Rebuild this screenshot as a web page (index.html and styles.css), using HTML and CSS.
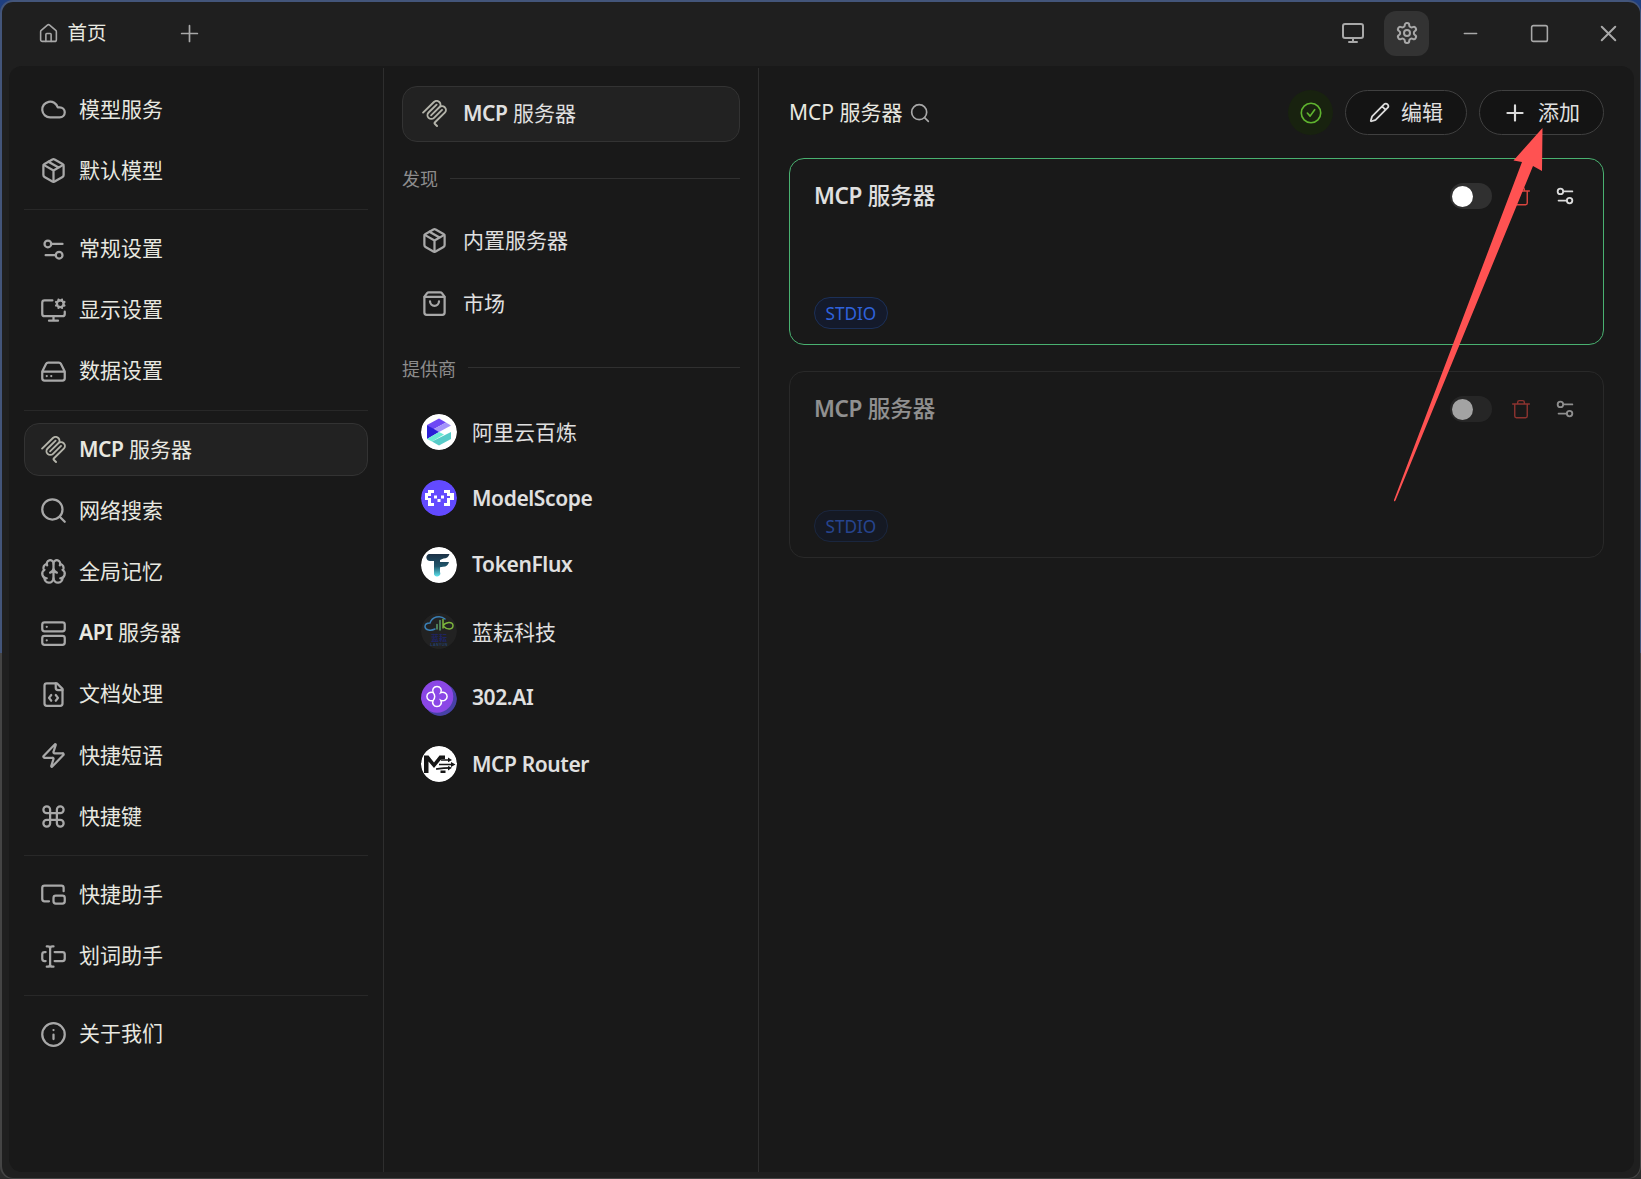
FILE: index.html
```html
<!DOCTYPE html>
<html lang="zh-CN">

<head>
  <meta charset="UTF-8">
  <meta name="viewport" content="width=device-width, initial-scale=1.0">
  <title>MCP 服务器</title>
  <link rel="stylesheet" href="styles.css">
</head>

<body>
  <!-- 图标 -->
  <svg class="sprite" xmlns="http://www.w3.org/2000/svg">
    <symbol id="home" viewBox="0 0 24 24">
      <path d="M15 21v-8a1 1 0 0 0-1-1h-4a1 1 0 0 0-1 1v8" />
      <path d="M3 10a2 2 0 0 1 .709-1.528l7-5.999a2 2 0 0 1 2.582 0l7 5.999A2 2 0 0 1 21 10v9a2 2 0 0 1-2 2H5a2 2 0 0 1-2-2z" />
    </symbol>
    <symbol id="plus" viewBox="0 0 24 24"><path d="M5 12h14M12 5v14" /></symbol>
    <symbol id="monitor" viewBox="0 0 24 24">
      <rect x="2" y="3" width="20" height="14" rx="2" />
      <path d="M8 21h8M12 17v4" />
    </symbol>
    <symbol id="settings" viewBox="0 0 24 24">
      <path d="M12.22 2h-.44a2 2 0 0 0-2 2v.18a2 2 0 0 1-1 1.73l-.43.25a2 2 0 0 1-2 0l-.15-.08a2 2 0 0 0-2.73.73l-.22.38a2 2 0 0 0 .73 2.73l.15.1a2 2 0 0 1 1 1.72v.51a2 2 0 0 1-1 1.74l-.15.09a2 2 0 0 0-.73 2.73l.22.38a2 2 0 0 0 2.73.73l.15-.08a2 2 0 0 1 2 0l.43.25a2 2 0 0 1 1 1.73V20a2 2 0 0 0 2 2h.44a2 2 0 0 0 2-2v-.18a2 2 0 0 1 1-1.73l.43-.25a2 2 0 0 1 2 0l.15.08a2 2 0 0 0 2.73-.73l.22-.39a2 2 0 0 0-.73-2.73l-.15-.08a2 2 0 0 1-1-1.74v-.5a2 2 0 0 1 1-1.74l.15-.09a2 2 0 0 0 .73-2.73l-.22-.38a2 2 0 0 0-2.73-.73l-.15.08a2 2 0 0 1-2 0l-.43-.25a2 2 0 0 1-1-1.73V4a2 2 0 0 0-2-2z" />
      <circle cx="12" cy="12" r="3" />
    </symbol>
    <symbol id="minus" viewBox="0 0 24 24"><path d="M5 12h14" /></symbol>
    <symbol id="square" viewBox="0 0 24 24"><rect x="3" y="3" width="18" height="18" rx="2" /></symbol>
    <symbol id="close" viewBox="0 0 24 24"><path d="M18 6 6 18M6 6l12 12" /></symbol>
    <symbol id="cloud" viewBox="0 0 24 24"><path d="M17.5 19H9a7 7 0 1 1 6.71-9h1.79a4.5 4.5 0 1 1 0 9Z" /></symbol>
    <symbol id="package" viewBox="0 0 24 24">
      <path d="M11 21.73a2 2 0 0 0 2 0l7-4A2 2 0 0 0 21 16V8a2 2 0 0 0-1-1.73l-7-4a2 2 0 0 0-2 0l-7 4A2 2 0 0 0 3 8v8a2 2 0 0 0 1 1.73z" />
      <path d="M12 22V12M3.29 7 12 12l8.71-5M7.5 4.27l9 5.15" />
    </symbol>
    <symbol id="sliders" viewBox="0 0 24 24">
      <path d="M20 7h-9M14 17H5" />
      <circle cx="17" cy="17" r="3" />
      <circle cx="7" cy="7" r="3" />
    </symbol>
    <symbol id="monitor-cog" viewBox="0 0 24 24">
      <path d="M12 17v4M8 21h8M22 13v2a2 2 0 0 1-2 2H4a2 2 0 0 1-2-2V5a2 2 0 0 1 2-2h7" />
      <path d="m14.305 7.53.923-.382m0-2.296-.923-.383m2.547-1.241-.383-.924m.383 6.468-.383.923m2.679-6.467.383-.924m-.001 7.392-.382-.924m1.624-3.92.924-.383m-.924 2.679.924.383" />
      <circle cx="18" cy="6" r="3" />
    </symbol>
    <symbol id="drive" viewBox="0 0 24 24">
      <path d="M22 12H2M5.45 5.11 2 12v6a2 2 0 0 0 2 2h16a2 2 0 0 0 2-2v-6l-3.45-6.89A2 2 0 0 0 16.76 4H7.24a2 2 0 0 0-1.79 1.11zM6 16h.01M10 16h.01" />
    </symbol>
    <symbol id="mcp" viewBox="0 0 24 24">
      <g fill="currentColor" stroke="none">
        <path d="M15.688 2.343a2.588 2.588 0 00-3.61 0l-9.626 9.44a.863.863 0 01-1.203 0 .823.823 0 010-1.18l9.626-9.44a4.313 4.313 0 016.016 0 4.116 4.116 0 011.204 3.54 4.3 4.3 0 013.609 1.18l.05.05a4.115 4.115 0 010 5.9l-8.706 8.537a.274.274 0 000 .393l1.788 1.754a.823.823 0 010 1.18.863.863 0 01-1.203 0l-1.788-1.753a1.92 1.92 0 010-2.754l8.706-8.538a2.47 2.47 0 000-3.54l-.05-.049a2.588 2.588 0 00-3.607-.003l-7.172 7.034-.002.002-.098.097a.863.863 0 01-1.204 0 .823.823 0 010-1.18l7.273-7.133a2.47 2.47 0 00-.003-3.537z" />
        <path d="M14.485 4.703a.823.823 0 000-1.18.863.863 0 00-1.204 0l-7.119 6.982a4.115 4.115 0 000 5.9 4.314 4.314 0 006.016 0l7.12-6.982a.823.823 0 000-1.18.863.863 0 00-1.204 0l-7.119 6.982a2.588 2.588 0 01-3.61 0 2.47 2.47 0 010-3.54l7.12-6.982z" />
      </g>
    </symbol>
    <symbol id="search" viewBox="0 0 24 24"><circle cx="11" cy="11" r="9" /><path d="m22 22-4.5-4.5" /></symbol>
    <symbol id="brain" viewBox="0 0 24 24">
      <path d="M12 18V5M15 13a4.17 4.17 0 0 1-3-4 4.17 4.17 0 0 1-3 4" />
      <path d="M17.598 6.5A3 3 0 1 0 12 5a3 3 0 1 0-5.598 1.5" />
      <path d="M17.997 5.125a4 4 0 0 1 2.526 5.77M18 18a4 4 0 0 0 2-7.464" />
      <path d="M19.967 17.483A4 4 0 1 1 12 18a4 4 0 1 1-7.967-.517" />
      <path d="M6 18a4 4 0 0 1-2-7.464M6.003 5.125a4 4 0 0 0-2.526 5.77" />
    </symbol>
    <symbol id="server" viewBox="0 0 24 24">
      <rect x="2" y="2" width="20" height="8" rx="2" />
      <rect x="2" y="14" width="20" height="8" rx="2" />
      <path d="M6 6h.01M6 18h.01" />
    </symbol>
    <symbol id="file-code" viewBox="0 0 24 24">
      <path d="M10 12.5 8 15l2 2.5M14 12.5l2 2.5-2 2.5M14 2v4a2 2 0 0 0 2 2h4" />
      <path d="M15 2H6a2 2 0 0 0-2 2v16a2 2 0 0 0 2 2h12a2 2 0 0 0 2-2V7z" />
    </symbol>
    <symbol id="zap" viewBox="0 0 24 24">
      <path d="M4 14a1 1 0 0 1-.78-1.63l9.9-10.2a.5.5 0 0 1 .86.46l-1.92 6.02A1 1 0 0 0 13 10h7a1 1 0 0 1 .78 1.63l-9.9 10.2a.5.5 0 0 1-.86-.46l1.92-6.02A1 1 0 0 0 11 14z" />
    </symbol>
    <symbol id="command" viewBox="0 0 24 24">
      <path d="M15 6v12a3 3 0 1 0 3-3H6a3 3 0 1 0 3 3V6a3 3 0 1 0-3 3h12a3 3 0 1 0-3-3" />
    </symbol>
    <symbol id="pip" viewBox="0 0 24 24">
      <path d="M21 9V6a2 2 0 0 0-2-2H4a2 2 0 0 0-2 2v10c0 1.1.9 2 2 2h4" />
      <rect x="12" y="13" width="10" height="7" rx="2" />
    </symbol>
    <symbol id="text-cursor" viewBox="0 0 24 24">
      <path d="M12 21h-1a2 2 0 0 1-2-2 2 2 0 0 1-2 2H6M13 8h7a2 2 0 0 1 2 2v4a2 2 0 0 1-2 2h-7M5 16H4a2 2 0 0 1-2-2v-4a2 2 0 0 1 2-2h1M6 3h1a2 2 0 0 1 2 2 2 2 0 0 1 2-2h1M9 5v14" />
    </symbol>
    <symbol id="info" viewBox="0 0 24 24"><circle cx="12" cy="12" r="10" /><path d="M12 16v-4M12 8h.01" /></symbol>
    <symbol id="bag" viewBox="0 0 24 24">
      <path d="M16 10a4 4 0 0 1-8 0M3.103 6.034h17.794" />
      <path d="M3.4 5.467a2 2 0 0 0-.4 1.2V20a2 2 0 0 0 2 2h14a2 2 0 0 0 2-2V6.667a2 2 0 0 0-.4-1.2l-2-2.667A2 2 0 0 0 17 2H7a2 2 0 0 0-1.6.8z" />
    </symbol>
    <symbol id="check" viewBox="0 0 24 24"><circle cx="12" cy="12" r="10.6" /><path d="m8 12 3 3.4 5-7" /></symbol>
    <symbol id="pencil" viewBox="0 0 24 24">
      <path d="M21.174 6.812a1 1 0 0 0-3.986-3.987L3.842 16.174a2 2 0 0 0-.5.83l-1.321 4.352a.5.5 0 0 0 .623.622l4.353-1.32a2 2 0 0 0 .83-.497zM15 5l4 4" />
    </symbol>
    <symbol id="trash" viewBox="0 0 24 24">
      <path d="M2 6h20M19.5 6v14.500a2 2 0 0 1-2 2h-11a2 2 0 0 1-2-2V6M8 6V4a2 2 0 0 1 2-2h4a2 2 0 0 1 2 2v2" />
    </symbol>
  </svg>

  <div class="window">
    <header class="titlebar">
      <div class="tab"><svg class="icon"><use href="#home" /></svg>首页</div>
      <svg class="icon tab-add"><use href="#plus" /></svg>
      <div class="window-tools">
        <span class="tool"><svg class="icon"><use href="#monitor" /></svg></span>
        <span class="tool active"><svg class="icon"><use href="#settings" /></svg></span>
        <span class="control"><svg class="icon"><use href="#minus" /></svg></span>
        <span class="control"><svg class="icon"><use href="#square" /></svg></span>
        <span class="control control-close"><svg class="icon"><use href="#close" /></svg></span>
      </div>
    </header>

    <div class="content">
      <nav class="sidebar">
        <a class="menu-item"><svg class="icon"><use href="#cloud" /></svg>模型服务</a>
        <a class="menu-item"><svg class="icon"><use href="#package" /></svg>默认模型</a>
        <hr>
        <a class="menu-item"><svg class="icon"><use href="#sliders" /></svg>常规设置</a>
        <a class="menu-item"><svg class="icon"><use href="#monitor-cog" /></svg>显示设置</a>
        <a class="menu-item"><svg class="icon"><use href="#drive" /></svg>数据设置</a>
        <hr>
        <a class="menu-item active"><svg class="icon"><use href="#mcp" /></svg><span><b>MCP</b> 服务器</span></a>
        <a class="menu-item"><svg class="icon"><use href="#search" /></svg>网络搜索</a>
        <a class="menu-item"><svg class="icon"><use href="#brain" /></svg>全局记忆</a>
        <a class="menu-item"><svg class="icon"><use href="#server" /></svg><span><b>API</b> 服务器</span></a>
        <a class="menu-item"><svg class="icon"><use href="#file-code" /></svg>文档处理</a>
        <a class="menu-item"><svg class="icon"><use href="#zap" /></svg>快捷短语</a>
        <a class="menu-item"><svg class="icon"><use href="#command" /></svg>快捷键</a>
        <hr>
        <a class="menu-item"><svg class="icon"><use href="#pip" /></svg>快捷助手</a>
        <a class="menu-item"><svg class="icon"><use href="#text-cursor" /></svg>划词助手</a>
        <hr>
        <a class="menu-item"><svg class="icon"><use href="#info" /></svg>关于我们</a>
      </nav>

      <nav class="submenu">
        <a class="sub-item active"><svg class="icon"><use href="#mcp" /></svg><span><b>MCP</b> 服务器</span></a>
        <div class="section">发现</div>
        <a class="sub-item"><svg class="icon"><use href="#package" /></svg>内置服务器</a>
        <a class="sub-item"><svg class="icon"><use href="#bag" /></svg>市场</a>
        <div class="section">提供商</div>
        <a class="provider">
          <svg class="avatar" viewBox="0 0 36 36">
            <circle cx="18" cy="18" r="18" fill="#fff" />
            <path d="M6 11 18 4.500l7 4L12 15.500z" fill="#6f48f5" />
            <path d="m12 15.500 13-7 5 3-12 6.500z" fill="#a594fa" />
            <path d="M6 11l12 7-12 7z" fill="#2a1fd6" />
            <path d="M6 25l12-7 5 2.500-12 7z" fill="#6cebd5" />
            <path d="m11 27.500 19-9.500v7l-12 6.500z" fill="#57cbc8" />
          </svg>阿里云百炼</a>
        <a class="provider">
          <svg class="avatar" viewBox="0 0 36 36">
            <circle cx="18" cy="18" r="18" fill="#624aff" />
            <path d="M7 10h6v3h-3v3H7v2h3v5h3v3H7v-6H4v-7h3zM29 10h-6v3h3v3h3v2h-3v5h-3v3h6v-6h4v-7h-4zM13 15.500h3v3h-3zM20 15.500h3v3h-3zM16.500 19h3v3h-3z" fill="#fff" />
          </svg><b>ModelScope</b></a>
        <a class="provider">
          <svg class="avatar" viewBox="0 0 36 36">
            <defs>
              <linearGradient id="flux" x1="0" y1="0" x2="0" y2="1">
                <stop offset="0" stop-color="#1c3146" />
                <stop offset=".55" stop-color="#1f566b" />
                <stop offset="1" stop-color="#5ee4ee" />
              </linearGradient>
            </defs>
            <circle cx="18" cy="18" r="18" fill="#fff" />
            <path d="M8 7h20.500c-1 3-3 4.600-6 4.600L19 13v2h9c-.8 3.200-2.500 4.600-6 4.800l-3 .4V25a3 3 0 0 1-6 2.500V14H9c-3 0-4-3-3.500-4.500C6 8 7 7 8 7z" fill="url(#flux)" />
          </svg><b>TokenFlux</b></a>
        <a class="provider">
          <svg class="avatar" viewBox="0 0 36 36">
            <circle cx="18" cy="18" r="18" fill="#222" />
            <g fill="none" stroke-width="1.500" stroke-linecap="round">
              <path d="M14 16C10 18 4 17.500 4 13.500c0-3 3-3.500 5-3.500C11 4 19 1.500 24 6" stroke="#3a7fb5" />
              <path d="M16 11.500V16M19 7.500V17" stroke="#5d9e6a" />
              <path d="M22 6.500V15M22 13c2-4 10-5 10-.500S26 17 22 13" stroke="#7db53c" />
            </g>
            <text x="18" y="27.500" class="logo-cn">蓝耘</text>
            <text x="18" y="33.200" class="logo-en">LANYUN</text>
          </svg>蓝耘科技</a>
        <a class="provider">
          <svg class="avatar" viewBox="0 0 36 36">
            <circle cx="19.500" cy="19.500" r="16.500" fill="#4741a6" />
            <circle cx="16" cy="16.500" r="16.300" fill="#8b47e6" />
            <path d="M12.200 12.700a4.300 4.300 0 1 1 7.600 0 4.300 4.300 0 1 1 0 7.600 4.300 4.300 0 1 1-7.600 0 4.300 4.300 0 1 1 0-7.600zM12.200 12.700c2 2 2 5.600 0 7.600" fill="none" stroke="#fff" stroke-width="1.500" />
          </svg><b>302.AI</b></a>
        <a class="provider">
          <svg class="avatar" viewBox="0 0 36 36">
            <circle cx="18" cy="18" r="18" fill="#fff" />
            <path d="M3 27V9.500h4.500l5.500 7 5.500-7H24V13h-3.500l-7.500 9-5.500-6.500V27z" fill="#161616" />
            <path d="M19.500 24.500h5V27h-5z" fill="#161616" />
            <path d="M20 14h9M18 18.500h14M15 23c4 0 3-1.200 14-1.200" fill="none" stroke="#161616" stroke-width="1.700" />
            <path d="m27 11.500 4 2.500-4 2.200zM30 16l4.500 2.500L30 21zM27 20l4 1.800-4 2.600z" fill="#161616" />
          </svg><b>MCP Router</b></a>
      </nav>

      <main class="main">
        <div class="toolbar">
          <h2>MCP 服务器</h2>
          <svg class="icon toolbar-search"><use href="#search" /></svg>
          <div class="toolbar-actions">
            <span class="status"><svg class="icon"><use href="#check" /></svg></span>
            <button class="btn btn-edit"><svg class="icon"><use href="#pencil" /></svg>编辑</button>
            <button class="btn btn-add"><svg class="icon"><use href="#plus" /></svg>添加</button>
          </div>
        </div>

        <section class="card active">
          <div class="card-head">
            <h3><b>MCP</b> 服务器</h3>
            <span class="switch"></span>
            <svg class="icon trash"><use href="#trash" /></svg>
            <svg class="icon more"><use href="#sliders" /></svg>
          </div>
          <span class="tag">STDIO</span>
        </section>

        <section class="card disabled">
          <div class="card-head">
            <h3><b>MCP</b> 服务器</h3>
            <span class="switch"></span>
            <svg class="icon trash"><use href="#trash" /></svg>
            <svg class="icon more"><use href="#sliders" /></svg>
          </div>
          <span class="tag">STDIO</span>
        </section>
      </main>
    </div>
  </div>

  <!-- 指向“添加”按钮的箭头 -->
  <svg class="arrow" viewBox="0 0 150 374">
    <path d="M149.500 0 149 43 140 38 2.500 372.500 1 373.500l0-1.500L129 34l-8.500-1.500z" />
  </svg>
</body>

</html>
```

FILE: styles.css
```css
* {
  box-sizing: border-box;
}

body {
  margin: 0;
  height: 1179px;
  overflow: hidden;
  background: linear-gradient(#1f3f80 653px, #2b2b2b 653px);
  color: #e8e8e0;
  font-family: "Noto Sans", "Noto Sans CJK SC", sans-serif;
  font-size: 21px;
}

b {
  font-weight: 600;
  letter-spacing: -0.4px;
}

.sprite {
  display: none;
}

.icon {
  flex: none;
  width: 27px;
  height: 27px;
  fill: none;
  stroke: currentColor;
  stroke-width: 2;
  stroke-linecap: round;
  stroke-linejoin: round;
  color: #a8a8a8;
}

/* 窗口 */
.window {
  display: flex;
  flex-direction: column;
  height: 1179px;
  padding: 0 6px 6px 7px;
  border: 2px solid transparent;
  border-right-width: 1px;
  border-bottom-width: 1px;
  border-radius: 13px;
  /* 边框颜色在中间由蓝变灰 */
  background:
    linear-gradient(#1f1f1f, #1f1f1f) padding-box,
    linear-gradient(#43557a 653px, #444 653px) border-box;
}

.titlebar {
  display: flex;
  align-items: center;
  flex: none;
  height: 64px;
  padding-left: 29px;
  padding-bottom: 2px;
}

.tab {
  display: flex;
  align-items: center;
  gap: 9px;
  width: 141px;
  padding-bottom: 1px;
  font-size: 19.5px;
  line-height: 28px;
}

.tab .icon {
  width: 21px;
  height: 21px;
  margin-top: 2px;
  margin-left: -0.5px;
  stroke-width: 1.8;
}

.tab-add {
  width: 27px;
  height: 27px;
  margin-top: 1px;
  margin-left: -3px;
  stroke-width: 1.5;
}

.window-tools {
  display: flex;
  align-items: center;
  margin-left: auto;
}

.tool {
  display: flex;
  align-items: center;
  justify-content: center;
  width: 45px;
  height: 45px;
  margin-right: 9px;
  border-radius: 12px;
}

.tool .icon {
  width: 24px;
  height: 24px;
}

.tool.active {
  margin-right: 7px;
  background: #333;
}

.control {
  display: flex;
  align-items: center;
  justify-content: center;
  width: 69px;
}

.control .icon {
  width: 21px;
  height: 21px;
  stroke-width: 1.8;
}

.control-close {
  justify-content: flex-end;
  width: 60px;
  padding-right: 12px;
}

.control-close .icon {
  width: 27px;
  height: 27px;
}

.content {
  display: flex;
  flex: 1;
  border-radius: 13px;
  background: #191919;
}

/* 左侧菜单 */
.sidebar {
  display: flex;
  flex-direction: column;
  gap: 7.5px;
  width: 375px;
  margin-top: 2px;
  padding: 14.8px 15px 0;
  border-right: 1px solid #2e2e2e;
}

.sidebar hr {
  width: 100%;
  height: 1px;
  margin: 4.25px 0;
  border: 0;
  background: #282828;
}

.menu-item {
  display: flex;
  align-items: center;
  flex: none;
  gap: 12px;
  height: 53.7px;
  padding: 0 15px 2px;
  border: 1px solid transparent;
  border-radius: 15px;
  line-height: 30px;
}

.menu-item .icon {
  margin-top: 2px;
}

.menu-item.active,
.sub-item.active {
  border-color: #333;
  background: #222;
}

.menu-item.active .icon,
.sub-item.active .icon {
  color: #b4b4aa;
}

/* 二级菜单 */
.submenu {
  width: 375px;
  margin-top: 2px;
  padding: 18px 18px 0;
  border-right: 1px solid #2e2e2e;
  color: #e0e0e0;
}

.sub-item {
  display: flex;
  align-items: center;
  gap: 15px;
  height: 56px;
  padding: 0 18px 4px;
  border: 1px solid transparent;
  border-radius: 15px;
}

.sub-item .icon {
  margin-top: 3px;
}

.sub-item + .sub-item {
  margin-top: 7px;
}

.section {
  display: flex;
  align-items: center;
  gap: 12px;
  height: 70.5px;
  padding-top: 2px;
  color: #8c8c8c;
  font-size: 18px;
}

.section::after {
  content: '';
  flex: 1;
  height: 1px;
  background: #303030;
}

.provider {
  display: flex;
  align-items: center;
  gap: 15px;
  height: 59px;
  margin-bottom: 7.6px;
  padding-left: 19px;
  padding-bottom: 1px;
}

.avatar {
  width: 36px;
  height: 36px;
  margin-top: 1px;
  border-radius: 50%;
}

.logo-cn {
  fill: #1e2463;
  font-size: 8px;
  font-weight: 700;
  text-anchor: middle;
}

.logo-en {
  fill: #22406e;
  font-family: "Liberation Sans", sans-serif;
  font-size: 3.6px;
  font-weight: 700;
  letter-spacing: 0.4px;
  text-anchor: middle;
}

/* 服务器列表 */
.main {
  flex: 1;
  padding: 24px 30px 0;
}

.toolbar {
  display: flex;
  align-items: center;
  height: 45px;
  margin-bottom: 23px;
}

.toolbar h2 {
  margin: 0;
  padding-bottom: 3px;
  font-size: 21px;
  font-weight: 400;
}

.toolbar-search {
  width: 20px;
  height: 20px;
  margin-left: 8px;
}

.toolbar-actions {
  display: flex;
  gap: 12px;
  margin-left: auto;
}

.status {
  display: flex;
  align-items: center;
  justify-content: center;
  width: 45px;
  height: 45px;
  border-radius: 50%;
  background: #18220f;
}

.status .icon {
  width: 22px;
  height: 22px;
  color: #5fb32f;
  stroke-width: 1.8;
}

.btn {
  display: flex;
  align-items: center;
  height: 45px;
  padding: 0 0 3px;
  border: 1px solid #404040;
  border-radius: 23px;
  background: #141414;
  color: #e0e0e0;
  font: inherit;
}

.btn .icon {
  margin-top: 3px;
  color: #dcdcdc;
}

.btn-edit {
  gap: 11px;
  width: 122px;
  padding-left: 23px;
}

.btn-edit .icon {
  width: 21px;
  height: 21px;
}

.btn-add {
  gap: 10px;
  width: 125px;
  padding-left: 22px;
}

.btn-add .icon {
  width: 26px;
  height: 26px;
}

.card {
  display: flex;
  flex-direction: column;
  align-items: flex-start;
  justify-content: space-between;
  height: 187px;
  margin-bottom: 26px;
  padding: 21px 24px 15px;
  border: 1px solid #292929;
  border-radius: 15px;
}

.card.active {
  border-color: #49b170;
}

.card-head {
  display: flex;
  align-items: center;
  width: 100%;
  height: 32px;
}

.card h3 {
  flex: 1;
  margin: 0;
  padding-bottom: 3px;
  color: #e0e0e0;
  font-size: 22.5px;
  font-weight: 500;
}

.switch {
  width: 42px;
  height: 26px;
  margin-right: 18.5px;
  padding: 3px 2px;
  border-radius: 13px;
  background: #303030;
}

.switch::before {
  content: '';
  display: block;
  width: 21px;
  height: 21px;
  border-radius: 50%;
  background: #fff;
}

.trash {
  width: 20px;
  height: 20px;
  margin-right: 23.5px;
  color: #d9453f;
  stroke-width: 1.7;
}

.more {
  width: 22px;
  height: 22px;
  margin-right: 3px;
  color: #dcdcdc;
}

.tag {
  height: 32px;
  padding: 0 10.5px;
  border: 1px solid #1c3058;
  border-radius: 16px;
  background: #141a2b;
  color: #2f62dc;
  font-size: 17.2px;
  line-height: 31px;
}

.disabled > * > *,
.disabled .tag {
  opacity: 0.6;
}

.arrow {
  position: absolute;
  top: 128px;
  left: 1393px;
  width: 150px;
  height: 374px;
  fill: #ff5252;
}
```
